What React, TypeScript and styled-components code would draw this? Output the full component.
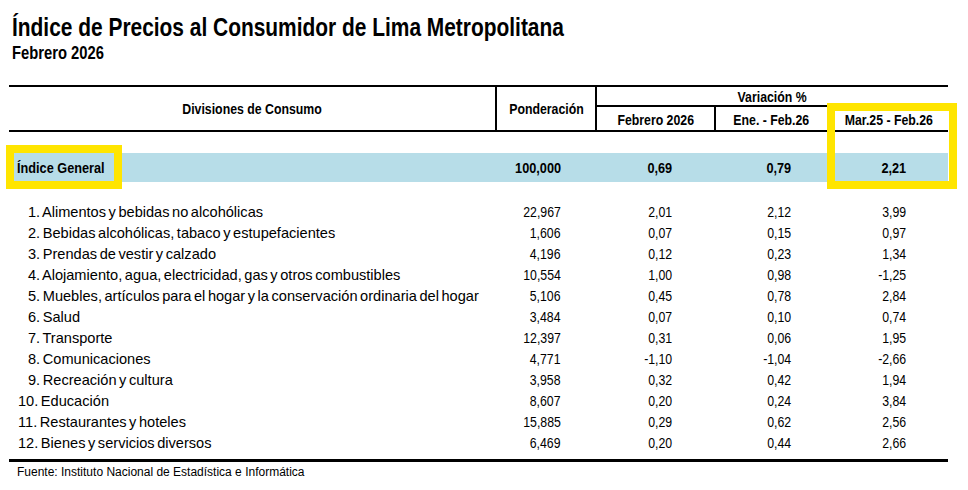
import React from "react";
import styled, { createGlobalStyle } from "styled-components";

const FONT = `"Liberation Sans", Arial, sans-serif`;
const COLS = "488px 100px 119px 113px 119px";

const Global = createGlobalStyle`
  html, body { margin: 0; padding: 0; background: #ffffff; }
  body { font-family: ${FONT}; color: #000; }
`;

/* Arial Narrow look: regular face compressed horizontally */
const Narrow = styled.span<{ $origin?: string }>`
  display: inline-block;
  white-space: nowrap;
  transform: scaleX(0.82);
  transform-origin: ${(p) => p.$origin ?? "left"} center;
`;

const Page = styled.div`
  padding: 12px 0 0 9px;
  width: 939px;
`;

const Title = styled.h1`
  margin: 0 0 0 3px;
  font-family: ${FONT};
  font-weight: bold;
  font-size: 25.5px;
  line-height: 30px;
  white-space: nowrap;
`;

const Subtitle = styled.h2`
  margin: 0 0 0 3px;
  font-family: ${FONT};
  font-weight: bold;
  font-size: 18px;
  line-height: 22px;
`;

const TableWrap = styled.div`
  position: relative;
  margin-top: 21px;
`;

const Header = styled.div`
  display: grid;
  grid-template-columns: ${COLS};
  grid-template-rows: 20px 23px;
  border-top: 2px solid #000;
  border-bottom: 2px solid #000;
`;

const HeadCell = styled.div<{ $col: string; $row: string; $right?: boolean; $bottom?: boolean; $pt?: number }>`
  grid-column: ${(p) => p.$col};
  grid-row: ${(p) => p.$row};
  box-sizing: border-box;
  display: flex;
  align-items: center;
  justify-content: center;
  padding-top: ${(p) => p.$pt ?? 0}px;
  font-weight: bold;
  font-size: 15px;
  white-space: nowrap;
  border-right: ${(p) => (p.$right ? "2px solid #000" : "none")};
  border-bottom: ${(p) => (p.$bottom ? "2px solid #000" : "none")};
`;

const IndexRow = styled.div`
  display: grid;
  grid-template-columns: ${COLS};
  height: 29px;
  margin-top: 21px;
  background: #b7dde8;
  align-items: center;
  font-weight: bold;
  font-size: 15.5px;
`;

const Body = styled.div`
  margin-top: 19px;
`;

const Row = styled.div`
  display: grid;
  grid-template-columns: ${COLS};
  height: 21px;
  align-items: center;
  font-size: 15px;
`;

const Label = styled.div<{ $indent: number }>`
  padding-left: ${(p) => p.$indent}px;
  white-space: nowrap;
  font-size: 14.6px;
  word-spacing: -1.5px;
`;

const Num = styled.div<{ $pr: number }>`
  text-align: right;
  padding-right: ${(p) => p.$pr}px;
`;

const IndexLabel = styled.div`
  padding-left: 8px;
`;

const BottomRule = styled.div`
  margin-top: 6px;
  border-top: 3px solid #000;
`;

const Source = styled.div`
  padding: 2px 0 0 8px;
  font-size: 12px;
  line-height: 16px;
`;

const Highlight = styled.div<{ $l: number; $t: number; $w: number; $h: number }>`
  position: absolute;
  left: ${(p) => p.$l}px;
  top: ${(p) => p.$t}px;
  width: ${(p) => p.$w}px;
  height: ${(p) => p.$h}px;
  box-sizing: border-box;
  border: 8px solid #ffe500;
  pointer-events: none;
`;

const PAD = [36, 44, 38, 42];

const rows: string[][] = [
  ["1. Alimentos y bebidas no alcohólicas", "22,967", "2,01", "2,12", "3,99"],
  ["2. Bebidas alcohólicas, tabaco y estupefacientes", "1,606", "0,07", "0,15", "0,97"],
  ["3. Prendas de vestir y calzado", "4,196", "0,12", "0,23", "1,34"],
  ["4. Alojamiento, agua, electricidad, gas y otros combustibles", "10,554", "1,00", "0,98", "-1,25"],
  ["5. Muebles, artículos para el hogar y la conservación ordinaria del hogar", "5,106", "0,45", "0,78", "2,84"],
  ["6. Salud", "3,484", "0,07", "0,10", "0,74"],
  ["7. Transporte", "12,397", "0,31", "0,06", "1,95"],
  ["8. Comunicaciones", "4,771", "-1,10", "-1,04", "-2,66"],
  ["9. Recreación y cultura", "3,958", "0,32", "0,42", "1,94"],
  ["10. Educación", "8,607", "0,20", "0,24", "3,84"],
  ["11. Restaurantes y hoteles", "15,885", "0,29", "0,62", "2,56"],
  ["12. Bienes y servicios diversos", "6,469", "0,20", "0,44", "2,66"],
];

const indexValues = ["100,000", "0,69", "0,79", "2,21"];

export default function App() {
  return (
    <>
      <Global />
      <Page>
        <Title>
          <Narrow>Índice de Precios al Consumidor de Lima Metropolitana</Narrow>
        </Title>
        <Subtitle>
          <Narrow>Febrero 2026</Narrow>
        </Subtitle>
        <TableWrap>
          <Header>
            <HeadCell $col="1" $row="1 / 3" $right><Narrow $origin="center">Divisiones de Consumo</Narrow></HeadCell>
            <HeadCell $col="2" $row="1 / 3" $right><Narrow $origin="center">Ponderación</Narrow></HeadCell>
            <HeadCell $col="3 / 6" $row="1" $bottom><Narrow $origin="center">Variación %</Narrow></HeadCell>
            <HeadCell $col="3" $row="2" $right $pt={2}><Narrow $origin="center">Febrero 2026</Narrow></HeadCell>
            <HeadCell $col="4" $row="2" $right $pt={2}><Narrow $origin="center">Ene. - Feb.26</Narrow></HeadCell>
            <HeadCell $col="5" $row="2" $pt={2}><Narrow $origin="center">Mar.25 - Feb.26</Narrow></HeadCell>
          </Header>
          <IndexRow>
            <IndexLabel><Narrow>Índice General</Narrow></IndexLabel>
            {indexValues.map((v, i) => (
              <Num key={i} $pr={PAD[i]}><Narrow $origin="right">{v}</Narrow></Num>
            ))}
          </IndexRow>
          <Body>
            {rows.map((r) => (
              <Row key={r[0]}>
                <Label $indent={r[0].indexOf(".") > 1 ? 9 : 19}>{r[0]}</Label>
                {r.slice(1).map((v, i) => (
                  <Num key={i} $pr={PAD[i]}><Narrow $origin="right">{v}</Narrow></Num>
                ))}
              </Row>
            ))}
          </Body>
          <BottomRule />
          <Highlight $l={-3} $t={60} $w={116} $h={44} />
          <Highlight $l={818} $t={18} $w={130} $h={86} />
        </TableWrap>
        <Source>Fuente: Instituto Nacional de Estadística e Informática</Source>
      </Page>
    </>
  );
}
